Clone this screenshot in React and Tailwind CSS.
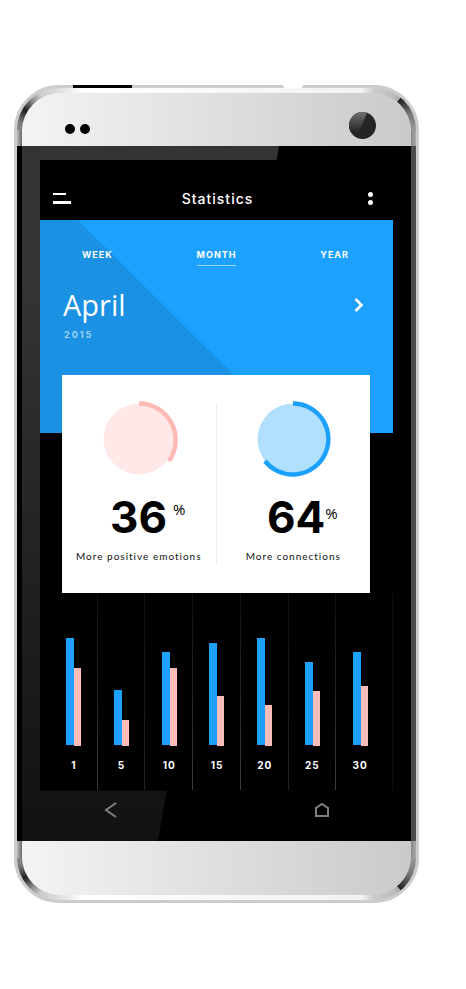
const days = [
  { day: 1, blue: 'h-[107px]', pink: 'h-[78px]', line: 'to-[#3c3c3c]' },
  { day: 5, blue: 'h-[55px]', pink: 'h-[26px]', line: 'to-[#222]' },
  { day: 10, blue: 'h-[93px]', pink: 'h-[78px]', line: 'to-[#3c3c3c]' },
  { day: 15, blue: 'h-[102px]', pink: 'h-[50px]', line: 'to-[#3c3c3c]' },
  { day: 20, blue: 'h-[107px]', pink: 'h-[41px]', line: 'to-[#222]' },
  { day: 25, blue: 'h-[83px]', pink: 'h-[55px]', line: 'to-[#3c3c3c]' },
  { day: 30, blue: 'h-[93px]', pink: 'h-[60px]', line: null },
];

function TopCap() {
  return (
    <header className="pt-[5px] px-[5px] rounded-t-[42px] [background:conic-gradient(from_270deg_at_100%_100%,#888,#777_12deg,#231f20_30deg,#8d8d8d_48deg,#ccc_62deg,#ddd_90deg)_0_0/42px_42px_no-repeat,conic-gradient(from_0deg_at_0%_100%,#ccc,#bbb_32deg,#aaa_39deg,#231f20_40deg,#777_66deg,#999_90deg)_100%_0/42px_42px_no-repeat,linear-gradient(90deg,#bbb,#666_5px,transparent_5px,transparent_calc(100%-5px),#888_calc(100%-5px),#aaa),linear-gradient(90deg,#ddd_42px,#fff_65px,#f2f2f2_calc(100%-54px),#ccc_calc(100%-42px))]">
      <div className="flex h-[53px] items-center justify-between rounded-t-[38px] bg-gradient-to-r from-[#f4f4f4] to-[#cacaca] pl-[43px] pr-[35px]">
        <div className="flex gap-[5px] pt-[19px]">
          <span className="size-[10px] rounded-full bg-black" />
          <span className="size-[10px] rounded-full bg-black" />
        </div>
        <svg viewBox="0 0 27 27" className="mt-[12px] size-[27px]" aria-hidden="true">
          <defs>
            <linearGradient id="lens" x1="0" y1="0" x2="0" y2="1">
              <stop offset="0" stopColor="#707070" />
              <stop offset="1" stopColor="#262425" />
            </linearGradient>
          </defs>
          <circle cx="13.5" cy="13.5" r="13.5" fill="#262324" />
          <path d="M18.2 0.8A13.5 13.5 0 0 0 1.5 19.5L10 20Z" fill="url(#lens)" />
        </svg>
      </div>
    </header>
  );
}

function BottomCap() {
  return (
    <footer className="pb-[5px] px-[5px] rounded-b-[42px] [background:conic-gradient(from_180deg_at_100%_0%,#ddd,#ccc_28deg,#8d8d8d_42deg,#231f20_60deg,#777_78deg,#888_90deg)_0_100%/42px_42px_no-repeat,conic-gradient(from_90deg_at_0%_0%,#999,#777_24deg,#231f20_50deg,#aaa_51deg,#bbb_58deg,#ccc_90deg)_100%_100%/42px_42px_no-repeat,linear-gradient(90deg,#bbb,#666_5px,transparent_5px,transparent_calc(100%-5px),#888_calc(100%-5px),#aaa),linear-gradient(90deg,#ddd_42px,#fff_65px,#f2f2f2_calc(100%-54px),#ccc_calc(100%-42px))]">
      <div className="h-[54px] rounded-b-[38px] bg-gradient-to-r from-[#f4f4f4] to-[#cacaca]" />
    </footer>
  );
}

function Stat({ value, label, fill, stroke, arc, gap, drop }) {
  return (
    <section className="flex flex-1 flex-col items-center">
      <svg viewBox="0 0 80 80" className="size-[80px]" aria-hidden="true">
        <circle cx="40" cy="40" r="35.5" fill={fill} />
        <path d={arc} fill="none" stroke={stroke} strokeWidth="4.5" />
      </svg>
      <p className={`mt-[10px] flex h-[56px] pl-[18px] text-black ${gap}`}>
        <span className="font-[Inter,sans-serif] text-[44px] font-bold leading-[56px]">{value}</span>
        <span className={`font-['Open_Sans',sans-serif] text-[15px] leading-[20px] ${drop}`}>%</span>
      </p>
      <p className="mt-px whitespace-nowrap font-[Lato,sans-serif] text-[10px] leading-[20px] tracking-[1px] text-[#111]">{label}</p>
    </section>
  );
}

export default function App() {
  return (
    <main className="min-h-screen bg-white pt-[85px] pr-[47px] pb-[86px] pl-[14px] font-[Inter,sans-serif]">
      <div className="relative rounded-[45px] border-[3px] border-[#ccc] bg-[#ccc]">
        <span className="absolute -top-[3px] left-[56px] h-[3px] w-[59px] bg-black" />
        <span className="absolute -top-[3px] left-[266px] h-[3px] w-[20px] rounded-b-full bg-white" />
        <TopCap />

        <div className="relative border-l-[5px] border-r-[5px] border-l-black border-r-[#4d4d4d] bg-black px-[18px] pt-[14px]">
          <div className="absolute inset-0 bg-gradient-to-b from-[#343434] from-20% to-[#111] [clip-path:polygon(0_0,257px_0,136px_100%,0_100%)]" />

          <div className="relative border-b border-[#050505] bg-black text-white">
            <div className="flex h-[60px] items-center justify-between pt-[17px] pr-[16px] pl-[13px]">
              <button aria-label="Menu" className="flex h-6 flex-col justify-center gap-[6px]">
                <span className="h-[2px] w-[13px] bg-white" />
                <span className="h-[3px] w-[18px] bg-white" />
              </button>
              <h1 className="text-[14px] font-medium leading-5 tracking-[1px]">Statistics</h1>
              <button aria-label="More options" className="flex h-6 w-[13px] flex-col items-center justify-center gap-[3px]">
                <span className="size-[5px] rounded-full bg-white" />
                <span className="size-[5px] rounded-full bg-white" />
              </button>
            </div>

            <div className="relative h-[213px] bg-[#1ca1ff]">
              <div className="absolute inset-0 bg-[#1a91e2] [clip-path:polygon(0_0,38px_0,252px_213px,0_213px)]" />
              <nav className="relative flex justify-between pt-[25px] pr-[44px] pl-[42px] text-[9px] font-bold leading-5 tracking-[1px]">
                <button>WEEK</button>
                <button className="relative">
                  MONTH
                  <span className="absolute right-0 -bottom-px left-0 h-px bg-[#9bd5ff]" />
                </button>
                <button>YEAR</button>
              </nav>
              <div className="relative mt-[20px] flex items-center justify-between pr-[29px] pl-[23px]">
                <h2 className="font-['Open_Sans',sans-serif] text-[29px] leading-[40px]">April</h2>
                <button aria-label="Next month">
                  <svg viewBox="0 0 10 14" className="h-[14px] w-[10px]" fill="none" stroke="white" strokeWidth="2.5" aria-hidden="true">
                    <path d="M1.5 1L7.5 7L1.5 13" />
                  </svg>
                </button>
              </div>
              <p className="relative pl-[24px] text-[9px] font-bold leading-5 tracking-[2px] text-[#a3d3f3]">2015</p>
            </div>

            <div className="relative -mt-[58px] mr-[23px] ml-[22px] flex h-[218px] bg-white pt-[24px]">
              <Stat value="36" label="More positive emotions" fill="#ffe9e8" stroke="#ffbab6" arc="M40 4.5A36.5 36.5 0 0 1 70 62" gap="gap-[6px]" drop="mt-[10px]" />
              <div className="mt-[4px] h-[161px] w-px bg-[#eee]" />
              <Stat value="64" label="More connections" fill="#b1e0ff" stroke="#1ca1ff" arc="M40 4.5A35.5 35.5 0 1 1 12 62" gap="gap-0" drop="mt-[14px]" />
            </div>

            <ol className="grid h-[197px] grid-cols-7 border-r border-[#0d0d0d] pr-[8px] pl-[10px]">
              {days.map((d) => (
                <li key={d.day} className="relative flex flex-col justify-end pb-[15px]">
                  <div className="flex items-end justify-center">
                    <span className={`mb-px w-[8px] bg-[#1ca1ff] ${d.blue}`} />
                    <span className={`w-[7px] bg-[#ffbdba] ${d.pink}`} />
                  </div>
                  <span className="mt-[9px] text-center text-[10px] font-bold leading-5 tracking-[1px]">{d.day}</span>
                  {d.line && <span className={`absolute inset-y-0 right-0 w-px bg-gradient-to-b from-[#111] ${d.line}`} />}
                </li>
              ))}
            </ol>
          </div>

          <nav className="relative flex h-[50px] justify-between pt-[11px] pr-[64px] pl-[64px]">
            <button aria-label="Back" className="h-[16px]">
              <svg viewBox="0 0 14 16" className="h-[16px] w-[14px]" fill="none" stroke="#808080" strokeWidth="2" aria-hidden="true">
                <path d="M12 1L2 8L12 15" />
              </svg>
            </button>
            <button aria-label="Home" className="h-[16px]">
              <svg viewBox="0 0 14 16" className="h-[16px] w-[14px]" fill="none" stroke="#808080" strokeWidth="2" aria-hidden="true">
                <path d="M1 14V6L7 2L13 6V14Z" />
              </svg>
            </button>
          </nav>
        </div>

        <BottomCap />
      </div>
    </main>
  );
}
